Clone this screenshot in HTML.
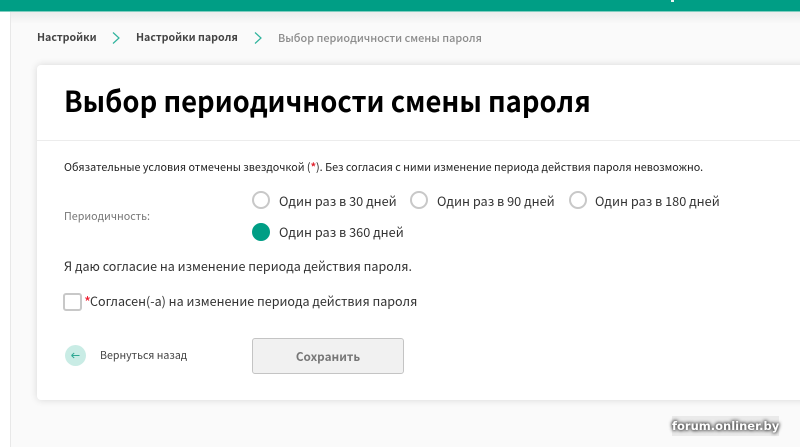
<!DOCTYPE html>
<html lang="ru"><head><meta charset="utf-8"><title>Выбор периодичности смены пароля</title>
<style>
html,body{margin:0;padding:0}
body{width:800px;height:447px;overflow:hidden;position:relative;background:#fafafa;font-family:"Noto Sans CJK SC","Liberation Sans",sans-serif;color:#222}
.t{position:absolute;white-space:nowrap;line-height:20px}
#side{position:absolute;left:0;top:12px;width:10px;height:435px;background:#fff;border-right:1px solid #e8e8e8}
#top{position:absolute;left:0;top:0;width:800px;height:11px;background:#009e85;border-bottom:1px solid #7fcdbf;box-sizing:content-box}
#shade{position:absolute;left:11px;top:12px;width:789px;height:12px;background:linear-gradient(#ececec,#fafafa)}
#card{position:absolute;left:37px;top:65px;width:780px;height:335px;background:#fff;border-radius:4px;box-shadow:0 0 8px rgba(0,0,0,.14)}
#div{position:absolute;left:37px;top:140px;width:763px;height:1px;background:#ececec}
.r{position:absolute;width:14px;height:14px;border:2px solid #c8c8c8;border-radius:50%;background:#fff}
.lbl{font-size:12.72px;color:#333}
.lb2{font-size:12.55px;color:#333}
.st{color:#ee1c2e;font-size:15px;line-height:10px}
</style></head><body>
<div id="top"></div><div id="shade"></div><div id="side"></div>
<div style="position:absolute;left:671px;top:0;width:3px;height:2px;background:#e8f6f3"></div>
<div class="t" style="left:37px;top:28px;font-size:10.65px;font-weight:700;color:#444">Настройки</div>
<svg style="position:absolute;left:110px;top:31px" width="12" height="14" viewBox="0 0 12 14"><path d="M3 1.5 L9 7 L3 12.5" fill="none" stroke="#2fb39d" stroke-width="1.2"/></svg>
<div class="t" style="left:136px;top:28px;font-size:10.65px;font-weight:700;color:#444">Настройки пароля</div>
<svg style="position:absolute;left:252px;top:31px" width="12" height="14" viewBox="0 0 12 14"><path d="M3 1.5 L9 7 L3 12.5" fill="none" stroke="#2fb39d" stroke-width="1.2"/></svg>
<div class="t" style="left:278px;top:28px;font-size:10.9px;font-weight:500;color:#8c8c8c">Выбор периодичности смены пароля</div>
<div id="card"></div><div id="div"></div>
<div class="t" style="left:64px;top:80px;font-size:29px;line-height:40px;font-weight:700;color:#000;transform:scaleX(.945);transform-origin:0 0">Выбор периодичности смены пароля</div>
<div class="t" style="left:64px;top:157px;font-size:10.78px;color:#222">Обязательные условия отмечены звездочкой (<span style="color:#e0202c;font-weight:700">*</span>). Без согласия с ними изменение периода действия пароля невозможно.</div>
<div class="t" style="left:64px;top:207px;font-size:10.75px;color:#777">Периодичность:</div>
<div class="r" style="left:252px;top:191px"></div><div class="t lbl" style="left:279px;top:191px">Один раз в 30 дней</div>
<div class="r" style="left:410px;top:191px"></div><div class="t lbl" style="left:437px;top:191px">Один раз в 90 дней</div>
<div class="r" style="left:569px;top:191px"></div><div class="t lbl" style="left:595px;top:191px">Один раз в 180 дней</div>
<div class="r" style="left:252px;top:223px;background:#009e85;border-color:#009e85"></div><div class="t lbl" style="left:279px;top:222px">Один раз в 360 дней</div>
<div class="t lb2" style="left:64px;top:256px">Я даю согласие на изменение периода действия пароля.</div>
<div style="position:absolute;left:63px;top:293px;width:15px;height:14px;border:2px solid #c8c8c8;border-radius:3px;background:#fff"></div>
<div class="t st" style="left:84px;top:296px;line-height:14px">*</div>
<div class="t lb2" style="left:90px;top:291px">Согласен(-а) на изменение периода действия пароля</div>
<div style="position:absolute;left:65px;top:345px;width:21px;height:21px;border-radius:50%;background:#c9ece5"></div>
<svg style="position:absolute;left:65px;top:345px" width="21" height="21" viewBox="0 0 21 21"><path d="M6.5 10.5 H14.5 M6.5 10.5 L9.2 8 M6.5 10.5 L9.2 13" fill="none" stroke="#2fa893" stroke-width="1"/></svg>
<div class="t" style="left:100px;top:346px;font-size:10.63px;color:#444">Вернуться назад</div>
<div class="t" style="left:252px;top:338px;width:150px;height:34px;line-height:36px;background:#f1f1f1;border:1px solid #c4c4c4;border-radius:3px;text-align:center;font-size:11.75px;font-weight:700;color:#777">Сохранить</div>
<div class="t" style="left:672px;top:416px;font-family:'DejaVu Sans',sans-serif;font-size:11.5px;font-weight:700;color:#fff;background:rgba(120,120,120,.12);text-shadow:0 0 3px #555,0 0 3px #555,0 0 4px #555">forum.onliner.by</div>
</body></html>
